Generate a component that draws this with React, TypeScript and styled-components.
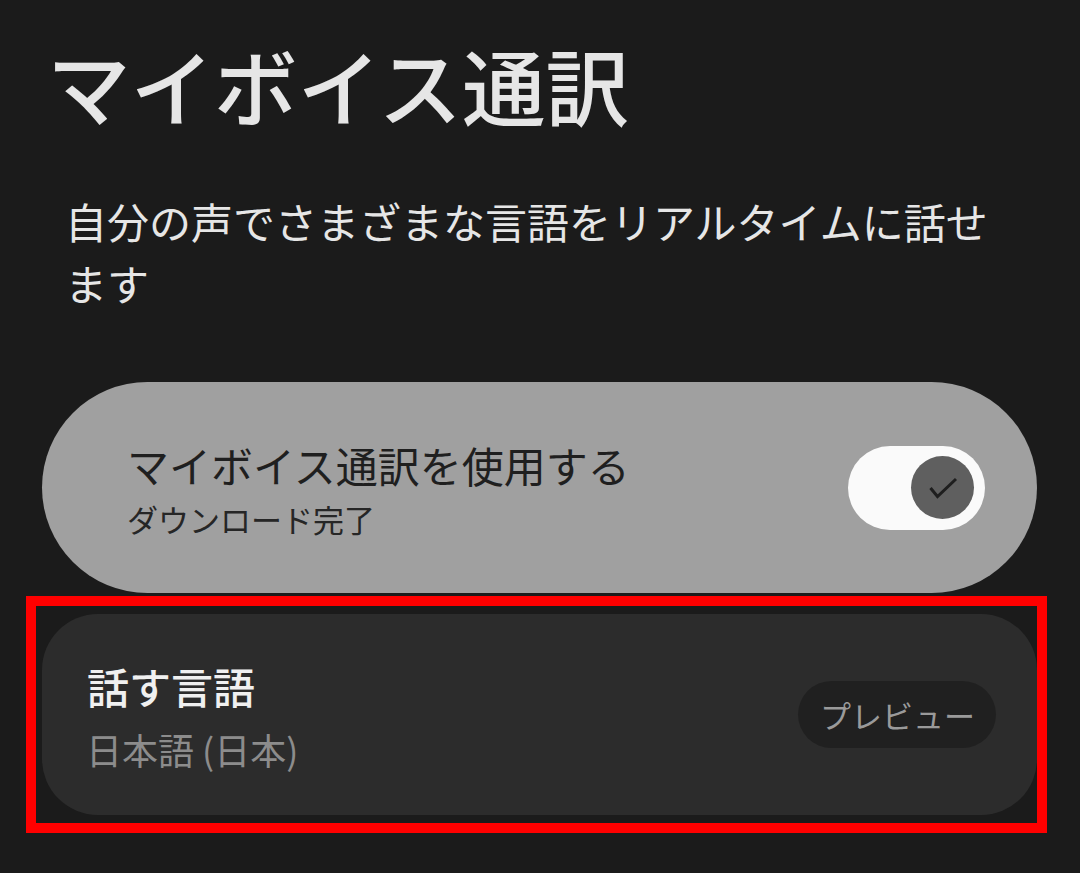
import React from "react";
import styled, { createGlobalStyle } from "styled-components";

const Global = createGlobalStyle`
  html, body {
    margin: 0;
    padding: 0;
    background: #1b1b1b;
  }
  body {
    font-family: "Noto Sans CJK JP", "Noto Sans", sans-serif;
    -webkit-font-smoothing: antialiased;
  }
`;

const Page = styled.div`
  width: 1080px;
  height: 873px;
  background: #1b1b1b;
  box-sizing: border-box;
  padding: 26px 43px 0 42px;
  display: flex;
  flex-direction: column;
  overflow: hidden;
`;

const Title = styled.h1`
  margin: 0 0 0 5px;
  font-size: 83.5px;
  line-height: 116px;
  font-weight: 500;
  color: #e6e6e6;
  letter-spacing: 0;
`;

const Description = styled.p`
  margin: 48px 0 0 23px;
  font-size: 42px;
  line-height: 62px;
  font-weight: 400;
  color: #e6e6e6;
`;

const Cards = styled.div`
  margin-top: 68px;
  display: flex;
  flex-direction: column;
  gap: 21px;
`;

const Card = styled.div<{ $tone: "light" | "dark" }>`
  position: relative;
  display: flex;
  align-items: center;
  justify-content: space-between;
  box-sizing: border-box;
  background: ${(p) => (p.$tone === "light" ? "#a0a0a0" : "#2c2c2c")};
  border-radius: ${(p) => (p.$tone === "light" ? "106px" : "56px")};
  height: ${(p) => (p.$tone === "light" ? "211px" : "201px")};
  padding: ${(p) => (p.$tone === "light" ? "0 52px 0 85px" : "0 41px 0 44px")};
`;

const TextBlock = styled.div`
  display: flex;
  flex-direction: column;
`;

const CardTitle = styled.div<{ $tone: "light" | "dark" }>`
  font-size: 42px;
  line-height: 56px;
  font-weight: ${(p) => (p.$tone === "light" ? 400 : 500)};
  color: ${(p) => (p.$tone === "light" ? "#1f1f1f" : "#f0f0f0")};
  margin-left: ${(p) => (p.$tone === "light" ? "0" : "1px")};
`;

const CardSub = styled.div<{ $tone: "light" | "dark" }>`
  font-size: ${(p) => (p.$tone === "light" ? "31px" : "36px")};
  line-height: ${(p) => (p.$tone === "light" ? "40px" : "46px")};
  margin-top: ${(p) => (p.$tone === "light" ? "6px" : "12px")};
  color: ${(p) => (p.$tone === "light" ? "#262626" : "#8c8c8c")};
`;

const Switch = styled.div`
  width: 137px;
  height: 84px;
  border-radius: 42px;
  background: #fafafa;
  display: flex;
  align-items: center;
  justify-content: flex-end;
  padding-right: 11px;
  box-sizing: border-box;
`;

const Thumb = styled.div`
  width: 63px;
  height: 63px;
  border-radius: 50%;
  background: #5f5f5f;
  display: flex;
  align-items: center;
  justify-content: center;
`;

const PreviewChip = styled.div`
  height: 67px;
  padding: 0 21px 0 22px;
  border-radius: 34px;
  background: #202020;
  color: #9a9a9a;
  font-size: 31px;
  display: flex;
  align-items: center;
`;

const Highlight = styled.div`
  position: absolute;
  left: -16px;
  right: -10px;
  top: -18px;
  bottom: -18px;
  border: 10px solid #ff0000;
  pointer-events: none;
`;

export default function App() {
  return (
    <>
      <Global />
      <Page>
        <Title>マイボイス通訳</Title>
        <Description>
          自分の声でさまざまな言語をリアルタイムに話せ
          <br />
          ます
        </Description>
        <Cards>
          <Card $tone="light">
            <TextBlock>
              <CardTitle $tone="light">マイボイス通訳を使用する</CardTitle>
              <CardSub $tone="light">ダウンロード完了</CardSub>
            </TextBlock>
            <Switch>
              <Thumb>
                <svg width="63" height="63" viewBox="0 0 63 63" fill="none">
                  <path
                    d="M19.5 32l7 8.5L45 23"
                    stroke="#1e1e1e"
                    strokeWidth="3"
                    strokeLinecap="butt"
                    strokeLinejoin="miter"
                  />
                </svg>
              </Thumb>
            </Switch>
          </Card>
          <Card $tone="dark">
            <TextBlock>
              <CardTitle $tone="dark">話す言語</CardTitle>
              <CardSub $tone="dark">日本語 (日本)</CardSub>
            </TextBlock>
            <PreviewChip>プレビュー</PreviewChip>
            <Highlight />
          </Card>
        </Cards>
      </Page>
    </>
  );
}
